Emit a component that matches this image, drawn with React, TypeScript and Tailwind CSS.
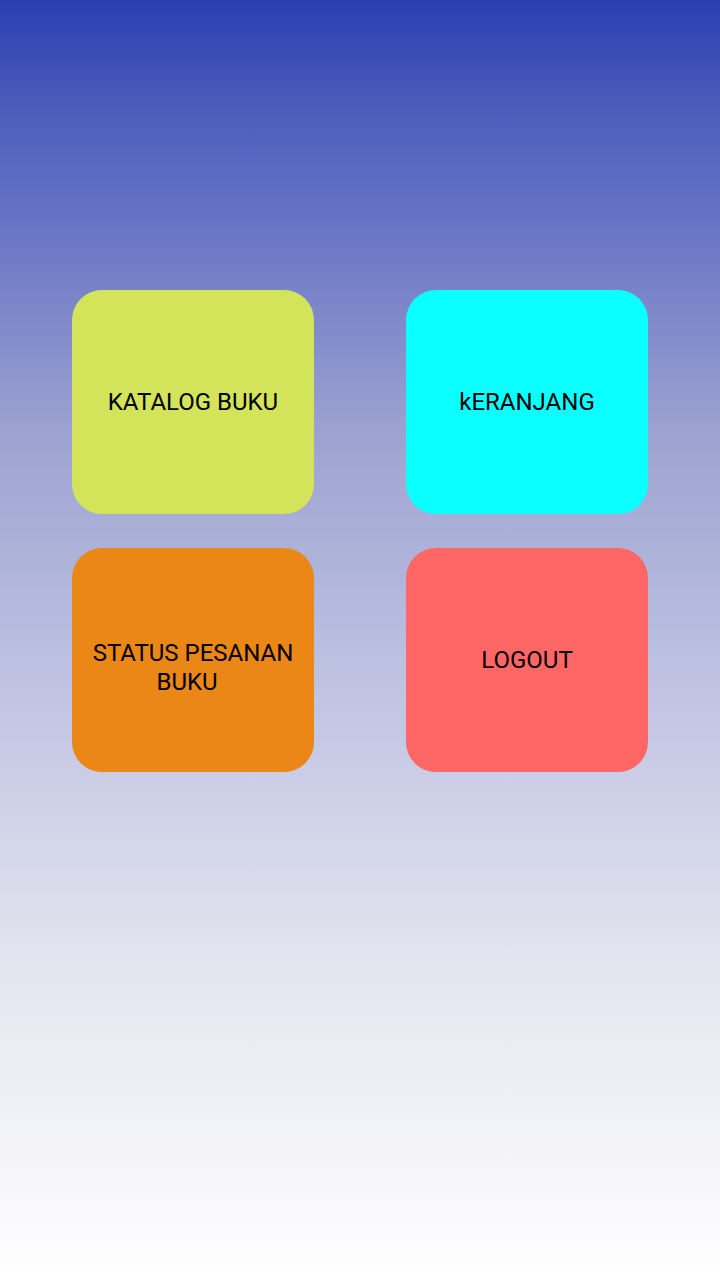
const menus = [
  { label: 'KATALOG BUKU', color: 'bg-[#d4e45a]', extra: '' },
  { label: 'kERANJANG', color: 'bg-[#0affff]', extra: '' },
  { label: 'STATUS PESANAN BUKU\u00a0\u00a0', color: 'bg-[#ea8716]', extra: 'pt-[16px]' },
  { label: 'LOGOUT', color: 'bg-[#ff6666]', extra: '' },
]

export default function App() {
  return (
    <div
      className="min-h-[1280px] w-full bg-[linear-gradient(to_bottom,#2b3fb1_0%,#4a5bbb_8%,#6370c4_16%,#9da3d0_34%,#b9bde0_50%,#e3e4ef_75%,#ffffff_100%)] pt-[290px] flex justify-center"
      style={{ fontFamily: 'Roboto, "Noto Sans", sans-serif' }}
    >
      <div className="grid grid-cols-[242px_242px] gap-x-[92px] gap-y-[34px] h-fit">
        {menus.map(({ label, color, extra }, i) => (
          <button
            key={i}
            className={`h-[224px] w-[242px] rounded-[30px] ${color} ${extra} flex items-center justify-center px-3 text-center text-[24px] leading-[29px] text-black`}
          >
            {label}
          </button>
        ))}
      </div>
    </div>
  )
}
